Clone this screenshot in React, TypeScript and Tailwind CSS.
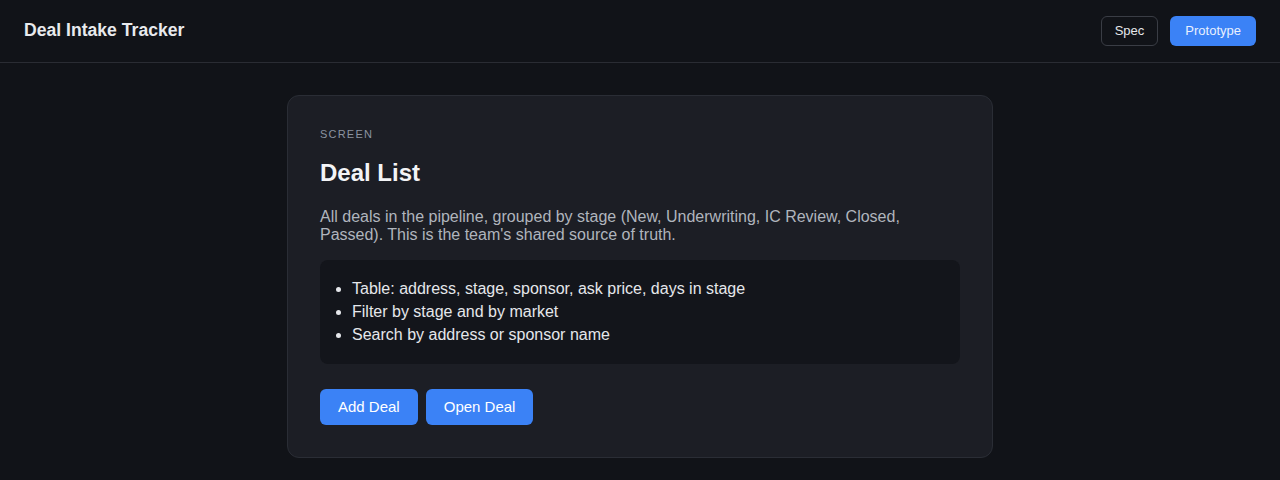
import React from "react";

const features = [
  "Table: address, stage, sponsor, ask price, days in stage",
  "Filter by stage and by market",
  "Search by address or sponsor name",
];

const App = () => {
  return (
    <div className="min-h-screen bg-[#111318] text-[#e5e7eb] font-['Liberation_Sans',Arial,sans-serif]">
      <header className="flex items-center justify-between px-6 pb-px h-[63px] border-b border-[#2a2c33]">
        <h1 className="text-[17.6px] font-bold text-[#e8eaed]">Deal Intake Tracker</h1>
        <div className="flex gap-3">
          <button className="h-[30px] px-[13px] rounded-md border border-[#3a3d45] text-[13px] text-[#e5e7eb]">
            Spec
          </button>
          <button className="h-[30px] px-[15px] rounded-md bg-[#3b82f6] text-[13px] text-[#e8f0fe]">
            Prototype
          </button>
        </div>
      </header>

      <main className="flex justify-center pt-8">
        <div className="w-[706px] rounded-xl border border-[#2a2d35] bg-[#1c1e25] p-8">
          <p className="text-[11px] tracking-[0.11em] uppercase text-[#8b93a0] leading-[13px]">Screen</p>
          <h2 className="mt-[18px] text-2xl leading-[28px] font-bold text-[#f3f4f6]">Deal List</h2>
          <p className="mt-[21px] text-base leading-[18.4px] text-[#b0b5bd]">
            All deals in the pipeline, grouped by stage (New, Underwriting, IC Review, Closed,
            Passed). This is the team's shared source of truth.
          </p>
          <div className="mt-[15px] rounded-lg bg-[#13151b] pl-4 pr-4 pt-[17px] pb-[18px]">
            <ul className="list-disc pl-4 text-base leading-[23px] text-[#e5e7eb]">
              {features.map((f) => (
                <li key={f}>{f}</li>
              ))}
            </ul>
          </div>
          <div className="mt-[25px] flex gap-2">
            <button className="h-9 px-[18px] rounded-md bg-[#3b82f6] text-[15px] text-white">Add Deal</button>
            <button className="h-9 px-[18px] rounded-md bg-[#3b82f6] text-[15px] text-white">Open Deal</button>
          </div>
        </div>
      </main>
    </div>
  );
};

export default App;
